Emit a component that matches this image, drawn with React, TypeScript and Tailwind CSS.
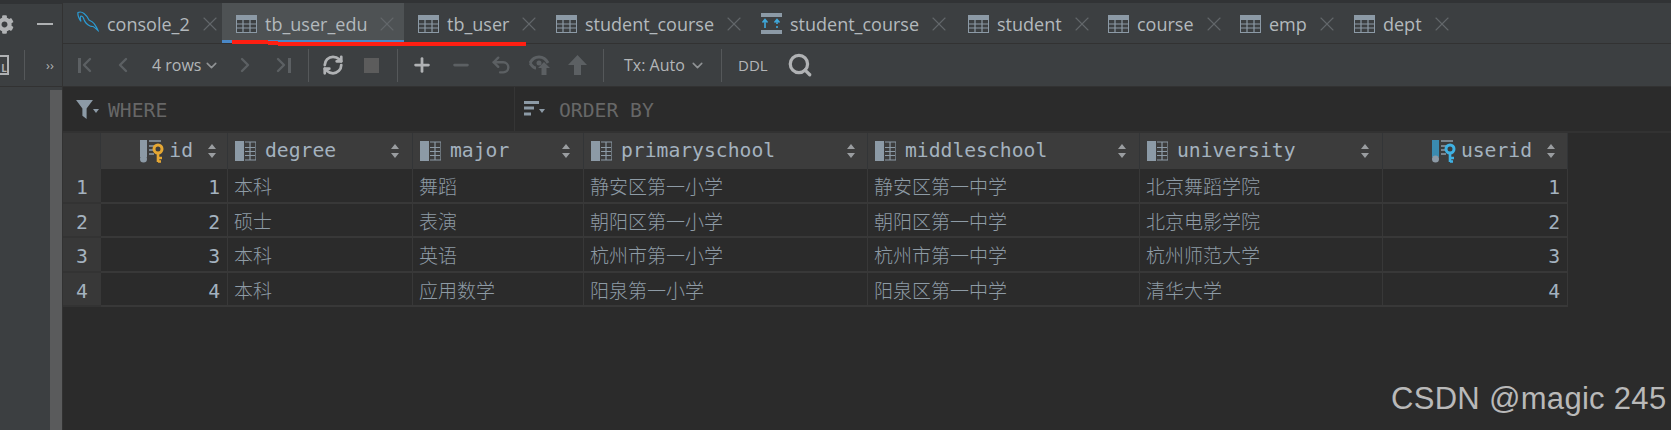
import { ChevronDown, ChevronLeft, ChevronRight, Minus, Plus, RefreshCw, Search, Undo2, X } from "lucide-react"
import { FaCog } from "react-icons/fa"

const mono = "font-['DejaVu_Sans_Mono',monospace]"

function TableIcon() {
  return (
    <svg width="21" height="18" viewBox="0 0 21 18" className="shrink-0">
      <rect x="0" y="0" width="21" height="18" fill="#8c9aa6" />
      <rect x="1" y="5" width="19" height="12" fill="#3c3f41" />
      <path d="M0 9h21M0 13h21M7 5v12M14 5v12" stroke="#8c9aa6" strokeWidth="1.2" />
    </svg>
  )
}

function ViewIcon() {
  return (
    <svg width="21" height="22" viewBox="0 0 21 22" className="shrink-0">
      <rect x="0" y="0" width="21" height="4" fill="#8c9aa6" />
      <rect x="0" y="17" width="21" height="4" fill="#8c9aa6" />
      <path d="M4 15V7M1.5 9.5 4 6.5l2.5 3" stroke="#3fa9dc" strokeWidth="1.6" fill="none" />
      <path d="M16 15v-2M16 11V7M13.5 9.5l2.5-3 2.5 3" stroke="#3fa9dc" strokeWidth="1.6" fill="none" />
    </svg>
  )
}

function Dolphin() {
  return (
    <svg width="22" height="22" viewBox="0 0 22 22" className="shrink-0 -mt-[3px]" fill="none" stroke="#2b9bd3" strokeWidth="1.2">
      <path d="M1 1.500C3 0.500 5 1 7 2.500c2.500 2 4 4 5 6.500 2 1 4 2 5 3.500 1 1.500 3 4 4 7-1.500-1-3-3-5-4-1 0-2 0-3-.5-3-1.500-5-3.500-6-6.500C6.500 6.500 5 5 4 5 3 6 3.500 9 4 10.500 2 7.500 0.500 4 1 1.500Z" />
    </svg>
  )
}

function ColumnIcon() {
  return (
    <svg width="21" height="20" viewBox="0 0 21 20" className="shrink-0">
      <rect x="0" y="0" width="9" height="20" fill="#8c9aa6" />
      <path d="M10 1h11v18H10M10 6.500h10M10 10.500h10M10 14.500h10M15 1v18" fill="none" stroke="#8c9aa6" strokeWidth="1.2" />
    </svg>
  )
}

function KeyColumnIcon({ color, bar }: { color: string; bar: string }) {
  return (
    <svg width="24" height="24" viewBox="0 0 24 24" className="shrink-0">
      <rect x="0" y="1" width="7" height="17" fill={bar} />
      <circle cx="3.500" cy="20" r="3.500" fill="#8c9aa6" />
      <path d="M9 2h12M9 7h6M9 11h5M9 15h5" fill="none" stroke="#8c9aa6" strokeWidth="1.4" />
      <circle cx="18" cy="10" r="4" fill="none" stroke={color} strokeWidth="3" />
      <path d="M18 13v10M18 19h4M18 22.500h3" fill="none" stroke={color} strokeWidth="2.600" />
    </svg>
  )
}

function SortArrows() {
  return (
    <svg width="8" height="14" viewBox="0 0 8 14" className="shrink-0">
      <path d="M4 0 8 5H0ZM4 14 0 9h8Z" fill="#9a9da0" />
    </svg>
  )
}

function Caret() {
  return (
    <svg width="6" height="4" viewBox="0 0 6 4" className="shrink-0 mt-[4px]">
      <path d="M0 0h6L3 4Z" fill="#8c9aa6" />
    </svg>
  )
}

const tabs = [
  { label: "console_2", width: "w-[159px]", icon: <Dolphin /> },
  { label: "tb_user_edu", width: "w-[182px]", icon: <TableIcon />, active: true },
  { label: "tb_user", width: "w-[138px]", icon: <TableIcon /> },
  { label: "student_course", width: "w-[205px]", icon: <TableIcon /> },
  { label: "student_course", width: "w-[207px]", icon: <ViewIcon /> },
  { label: "student", width: "w-[140px]", icon: <TableIcon /> },
  { label: "course", width: "w-[132px]", icon: <TableIcon /> },
  { label: "emp", width: "w-[114px]", icon: <TableIcon /> },
  { label: "dept", width: "w-[119px]", icon: <TableIcon /> },
]

const rows = [
  ["1", "本科", "舞蹈", "静安区第一小学", "静安区第一中学", "北京舞蹈学院", "1"],
  ["2", "硕士", "表演", "朝阳区第一小学", "朝阳区第一中学", "北京电影学院", "2"],
  ["3", "本科", "英语", "杭州市第一小学", "杭州市第一中学", "杭州师范大学", "3"],
  ["4", "本科", "应用数学", "阳泉第一小学", "阳泉区第一中学", "清华大学", "4"],
]

function Tab({ label, width, icon, active }: { label: string; width: string; icon: React.ReactNode; active?: boolean }) {
  return (
    <div
      className={`${width} h-[40px] shrink-0 flex items-center pl-[14px] pr-[7px] pt-[1px] gap-[8px] ${
        active ? "bg-[#4e5254] shadow-[inset_0_-3px_0_#4a88c7]" : ""
      }`}
    >
      {icon}
      <span className="text-[18px] leading-none text-[#b3b9bd]">{label}</span>
      <X size={24} strokeWidth={1.1} className="ml-auto text-[#63676a] shrink-0" />
    </div>
  )
}

function HeaderCell({ name, icon, right, pad }: { name: string; icon: React.ReactNode; right?: boolean; pad: string }) {
  return (
    <div className={`flex items-center border-r border-[#333537] bg-[#3c3c3c] ${pad} ${right ? "justify-end" : "pl-[7px]"}`}>
      {icon}
      <span className={`${right ? "ml-[5px] mr-[15px]" : "ml-[9px] mr-auto"} text-[19.7px] leading-none text-[#a4b2bf]`}>{name}</span>
      <SortArrows />
    </div>
  )
}

export default function App() {
  return (
    <div className="relative w-[1671px] h-[430px] overflow-hidden bg-[#2b2b2b] font-['Open_Sans',sans-serif]">
      <div className="h-[3px] bg-[#313335]" />
      <div className="flex h-[427px]">
        {/* left tool strip */}
        <div className="w-[63px] shrink-0 flex flex-col bg-[#3c3f41] border-r border-[#323232]">
          <div className="h-[41px] flex items-center border-t border-[#313335]">
            <FaCog size={19} className="-ml-[5px] text-[#b0b2b4] shrink-0" />
            <div className="ml-[23px] w-[16px] h-[2.500px] bg-[#afb1b3] shrink-0" />
          </div>
          <div className="h-[43px] flex items-center border-b border-[#323232]">
            <div className="-ml-[7px] w-[16px] h-[20px] border-2 border-[#afb1b3] flex items-end justify-end shrink-0">
              <span className="text-[10px] leading-none text-[#afb1b3] font-bold">L</span>
            </div>
            <div className="ml-[15px] w-px h-[30px] bg-[#55585a] shrink-0" />
            <span className="ml-[21px] text-[13px] leading-none text-[#afb1b3]">››</span>
          </div>
          <div className="flex-1 flex justify-end pt-[3px]">
            <div className="w-[12px] bg-[#5a5b5c]" />
          </div>
        </div>

        <div className="flex-1 min-w-0 flex flex-col">
          {/* tabs */}
          <div className="h-[41px] flex bg-[#3c3f41] border-b border-[#323232]">
            {tabs.map((t, i) => (
              <Tab key={i} {...t} />
            ))}
          </div>

          {/* toolbar */}
          <div className="h-[43px] flex items-center bg-[#3c3f41] border-b border-[#323232] text-[#5c6063]">
            <div className="ml-[15px] w-[2.500px] h-[15px] bg-[#5c6063] shrink-0" />
            <ChevronLeft size={24} strokeWidth={2.4} className="-ml-[5.500px] shrink-0" />
            <ChevronLeft size={24} strokeWidth={2.4} className="ml-[12px] shrink-0" />
            <span className="ml-[17px] w-[47px] shrink-0 whitespace-nowrap text-[16px] leading-none text-[#b3b6b8]">4 rows</span>
            <ChevronDown size={17} strokeWidth={2.2} className="ml-[3.500px] text-[#909395] shrink-0" />
            <ChevronRight size={24} strokeWidth={2.4} className="ml-[13.500px] shrink-0" />
            <ChevronRight size={24} strokeWidth={2.4} className="ml-[12px] shrink-0" />
            <div className="-ml-[5px] w-[2.500px] h-[15px] bg-[#5c6063] shrink-0" />
            <div className="ml-[17.500px] w-px h-[33px] bg-[#55585a] shrink-0" />
            <RefreshCw size={22} strokeWidth={3} className="ml-[12.500px] text-[#b0b2b4] shrink-0" />
            <div className="ml-[20.500px] w-[15px] h-[15px] bg-[#5c5c5c] shrink-0" />
            <div className="ml-[18px] w-px h-[33px] bg-[#55585a] shrink-0" />
            <Plus size={22} strokeWidth={3} className="ml-[13px] text-[#b0b2b4] shrink-0" />
            <Minus size={22} strokeWidth={3} className="ml-[16.500px] shrink-0" />
            <Undo2 size={22} strokeWidth={2.6} className="ml-[18.500px] shrink-0" />
            <svg width="22" height="22" viewBox="0 0 22 22" className="ml-[17px] shrink-0">
              <path d="M1 9c2-4 5-6 9-6s7 2 9 6" fill="none" stroke="#5c6063" strokeWidth="3" />
              <path d="M1 9c2 3 4 5 6 5" fill="none" stroke="#5c6063" strokeWidth="3" />
              <circle cx="10" cy="9" r="2.500" fill="#5c6063" />
              <path d="M15 8l6 6h-3.500v7h-5v-7H9Z" fill="#5c6063" />
            </svg>
            <svg width="19" height="20" viewBox="0 0 19 20" className="ml-[17px] shrink-0">
              <path d="M9.500 0 19 10h-6v10H6V10H0Z" fill="#5c6063" />
            </svg>
            <div className="ml-[16px] w-px h-[33px] bg-[#55585a] shrink-0" />
            <span className="ml-[20px] w-[61px] shrink-0 whitespace-nowrap text-[16px] leading-none text-[#b3b6b8]">Tx: Auto</span>
            <ChevronDown size={17} strokeWidth={2.2} className="ml-[4px] text-[#909395] shrink-0" />
            <div className="ml-[15px] w-px h-[33px] bg-[#55585a] shrink-0" />
            <span className="ml-[16px] w-[30px] shrink-0 text-[15px] leading-none text-[#b3b6b8]">DDL</span>
            <Search size={26} strokeWidth={3} className="ml-[18.500px] text-[#b0b2b4] shrink-0" />
          </div>

          {/* filter row */}
          <div className={`h-[44px] flex items-center text-[19.7px] leading-none text-[#676767] ${mono}`}>
            <div className="w-[452px] h-full flex items-center border-r border-[#353535] pl-[13px]">
              <svg width="17" height="19" viewBox="0 0 16 18" className="shrink-0">
                <path d="M0 0h16L10 8v10L6 15V8Z" fill="#8c9aa6" />
              </svg>
              <Caret />
              <span className="ml-[9px] pt-[3px]">WHERE</span>
            </div>
            <div className="flex items-center pl-[9px]">
              <svg width="15" height="15" viewBox="0 0 15 15" className="shrink-0">
                <path d="M0 1.500h15M0 7h10M0 13h7" stroke="#8c9aa6" strokeWidth="3" />
              </svg>
              <Caret />
              <span className="ml-[14px] pt-[3px]">ORDER BY</span>
            </div>
          </div>
          <div className="h-[2px] bg-[#323232]" />

          {/* result grid */}
          <div className={`w-[1505px] grid grid-cols-[38px_127px_185px_171px_284px_272px_243px_185px] grid-rows-[36px_repeat(4,34.5px)] ${mono}`}>
            <div className="bg-[#383838] border-r border-[#333537]" />
            <HeaderCell name="id" pad="pr-[11px]" right icon={<KeyColumnIcon color="#e5a733" bar="#8c9aa6" />} />
            <HeaderCell name="degree" pad="pr-[13px]" icon={<ColumnIcon />} />
            <HeaderCell name="major" pad="pr-[13px]" icon={<ColumnIcon />} />
            <HeaderCell name="primaryschool" pad="pr-[12px]" icon={<ColumnIcon />} />
            <HeaderCell name="middleschool" pad="pr-[13px]" icon={<ColumnIcon />} />
            <HeaderCell name="university" pad="pr-[13px]" icon={<ColumnIcon />} />
            <HeaderCell name="userid" pad="pr-[12px]" right icon={<KeyColumnIcon color="#3fb1e3" bar="#3a8bb0" />} />

            {rows.map((row, r) => (
              <div key={r} className="contents">
                <div className="flex items-center justify-center pt-[6px] bg-[#383838] border-b-2 border-[#333333] text-[19.7px] leading-none text-[#a4b2bf]">
                  {r + 1}
                </div>
                {row.map((cell, c) =>
                  c === 0 || c === 6 ? (
                    <div
                      key={c}
                      className="flex items-center justify-end pr-[7px] pt-[6px] border-r border-b-2 border-[#383838] text-[19.7px] leading-none text-[#a4b2bf]"
                    >
                      {cell}
                    </div>
                  ) : (
                    <div
                      key={c}
                      className="flex items-center pl-[6px] pt-[1px] border-r border-b-2 border-[#383838] text-[19px] leading-none text-[#8e9ba6] font-['Noto_Sans_CJK_SC',sans-serif] font-light"
                    >
                      {cell}
                    </div>
                  ),
                )}
              </div>
            ))}
          </div>
        </div>
      </div>

      {/* hand drawn red underline */}
      <svg width="300" height="8" viewBox="0 0 300 8" className="absolute left-[230px] top-[40px] pointer-events-none">
        <path d="M2 0h36v1h10v1h248v4H48v-1H38v-1H2Z" fill="#ff1f12" />
      </svg>

      {/* watermark */}
      <span className="absolute left-[1391px] top-[381px] text-[31px] leading-[36px] tracking-[0.3px] text-[#b9b9b9] font-['Liberation_Sans',sans-serif] whitespace-nowrap">
        CSDN @magic 245
      </span>
    </div>
  )
}
